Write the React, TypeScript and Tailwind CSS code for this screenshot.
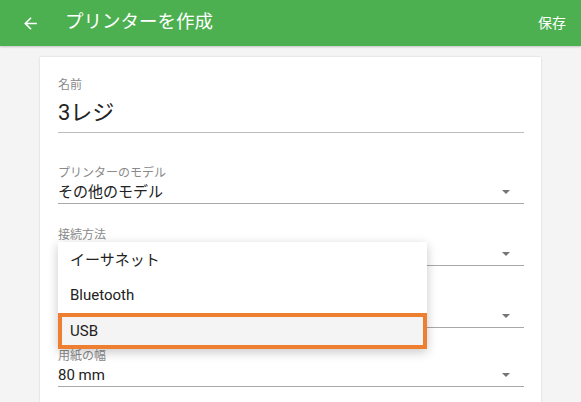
import React from "react";

const font = { fontFamily: 'Roboto, "Noto Sans CJK JP", sans-serif' };

function Arrow() {
  return (
    <svg width="10" height="6" viewBox="0 0 10 6" className="shrink-0">
      <path d="M1 1h8L5 5z" fill="#757575" />
    </svg>
  );
}

function SelectField({ label, value, className = "" }: { label: string; value: string; className?: string }) {
  return (
    <div className={"flex flex-col " + className}>
      <div className="h-[16px] leading-[16px] text-[12px] text-[#8a8a8a]">{label}</div>
      <div className="h-[22px] flex items-center justify-between border-b border-[#a8a8a8] box-content pr-[13px]">
        <span className="text-[15px] text-[#222]">{value}</span>
        <Arrow />
      </div>
    </div>
  );
}

export default function App() {
  return (
    <div className="w-[581px] h-[402px] overflow-hidden bg-[#f4f4f4] flex flex-col" style={font}>
      <div className="h-[46px] bg-[#4caf50] flex items-center shrink-0 shadow-[0_1px_2px_rgba(0,0,0,0.2)] relative z-10">
        <svg width="19" height="19" viewBox="0 0 24 24" className="ml-[21px]">
          <path d="M20 11H7.83l5.59-5.59L12 4l-8 8 8 8 1.41-1.41L7.83 13H20v-2z" fill="white" />
        </svg>
        <div className="ml-[25px] text-white text-[18.5px]">プリンターを作成</div>
        <div className="ml-auto mr-[15px] text-white text-[14px]">保存</div>
      </div>
      <div className="flex-1 pl-[40px] pt-[11px]">
        <div className="w-[501px] h-full bg-white shadow-[0_0_2px_rgba(0,0,0,0.15)] pt-[20px] pl-[18px] relative">
          <div className="w-[466px] flex flex-col">
            <div className="h-[16px] leading-[16px] text-[12px] text-[#8a8a8a]">名前</div>
            <div className="h-[39px] flex items-center border-b border-[#bdbdbd] box-content">
              <span className="text-[22px] text-[#222]">3レジ</span>
            </div>
            <SelectField label="プリンターのモデル" value="その他のモデル" className="mt-[32px]" />
            <SelectField label="接続方法" value="" className="mt-[23px]" />
            <SelectField label="" value="" className="mt-[23px]" />
            <SelectField label="用紙の幅" value="80 mm" className="mt-[20px]" />
          </div>
          <div className="absolute left-[18px] top-[185px] w-[369px] bg-white shadow-[0_3px_10px_rgba(0,0,0,0.22)] flex flex-col pt-[1px]">
            <div className="h-[35px] flex items-center pl-[12px] text-[15px] text-[#222]">イーサネット</div>
            <div className="h-[35px] flex items-center pl-[12px] text-[15px] text-[#222]">Bluetooth</div>
            <div className="h-[36px] flex items-center pl-[8px] text-[15px] text-[#222] bg-[#f4f4f4] border-[4px] border-[#ef7f30]">USB</div>
          </div>
        </div>
      </div>
    </div>
  );
}
